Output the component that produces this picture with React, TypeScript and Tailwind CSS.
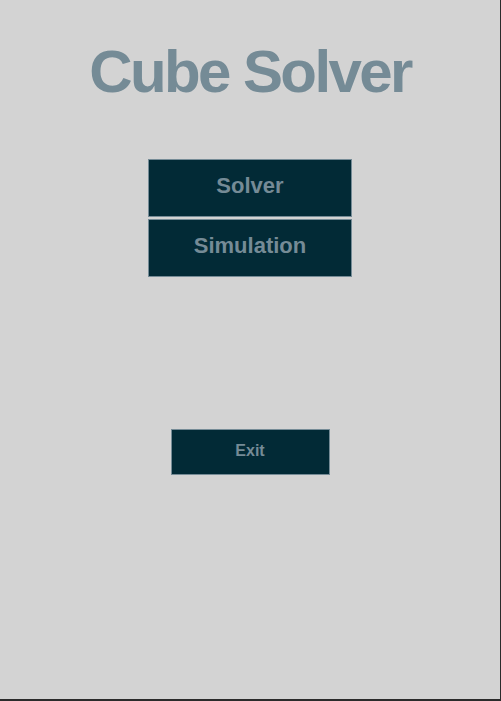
export default function App() {
  return (
    <div className="w-[501px] h-[701px] bg-[#2b2b2b]" style={{ fontFamily: '"Liberation Sans", Arial, sans-serif' }}>
      <div className="w-[500px] h-[699px] bg-[#d3d3d3] flex flex-col items-center">
        <h1 className="mt-[37px] text-[60px] leading-[70px] tracking-[-2.6px] font-bold text-[#758b96]">Cube Solver</h1>
        <div className="mt-[52px] flex flex-col gap-[2px]">
          <button className="w-[204px] h-[58px] pb-[5px] bg-[#022a36] border border-[#758b96] text-[22px] font-bold text-[#758b96]">
            Solver
          </button>
          <button className="w-[204px] h-[58px] pb-[5px] bg-[#022a36] border border-[#758b96] text-[22px] font-bold text-[#758b96]">
            Simulation
          </button>
        </div>
        <button className="mt-[152px] w-[159px] h-[46px] pb-[2px] bg-[#022a36] border border-[#758b96] text-[16px] font-bold text-[#758b96]">
          Exit
        </button>
      </div>
    </div>
  );
}
